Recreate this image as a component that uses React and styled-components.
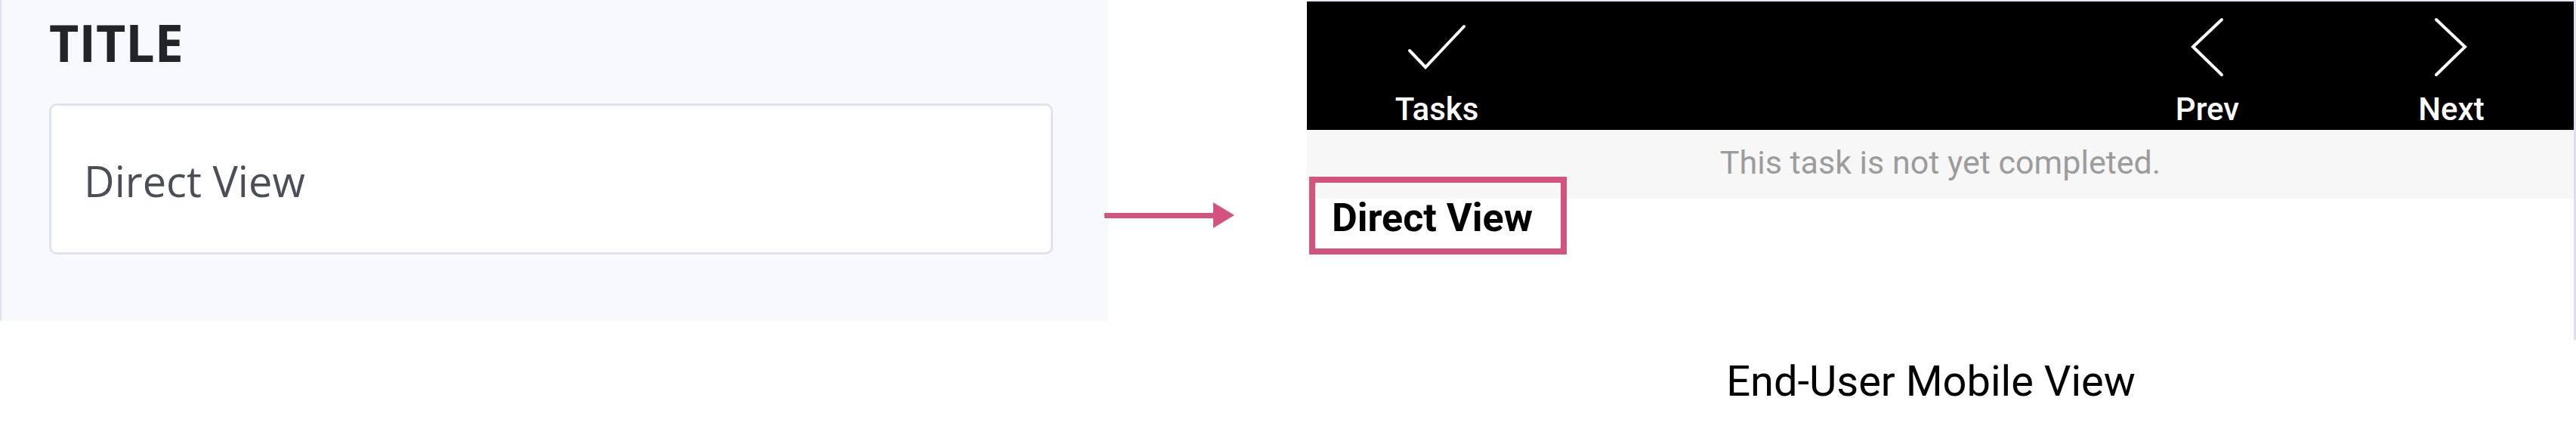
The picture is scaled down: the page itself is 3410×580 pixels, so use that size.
import React from 'react';
import styled, { createGlobalStyle } from 'styled-components';

// =======================
// Global
// =======================

const GlobalStyle = createGlobalStyle`
  html, body {
    margin: 0;
    padding: 0;
    background: #ffffff;
  }
  * {
    box-sizing: border-box;
  }
`;

const Page = styled.div`
  display: flex;
  align-items: flex-start;
  width: 3410px;
  height: 580px;
  overflow: hidden;
  background: #fff;
`;

// =======================
// Editor panel (left)
// =======================

const EditorPanel = styled.div`
  width: 1467px;
  height: 425px;
  flex-shrink: 0;
  background: #f8f9fd;
  border-left: 2px solid #dde1f0;
  padding: 22px 73px 0 63px;
  font-family: 'Open Sans', 'Liberation Sans', sans-serif;
`;

const FieldLabel = styled.div`
  font-size: 68px;
  line-height: 68px;
  font-weight: 700;
  color: #212529;
`;

const TextField = styled.div`
  margin-top: 47px;
  height: 200px;
  display: flex;
  align-items: center;
  background: #fff;
  border: 3px solid #dfe2ef;
  border-radius: 10px;
  padding: 4px 0 0 43px;
  font-size: 56px;
  color: #4a4f57;
`;

// =======================
// Arrow
// =======================

const ArrowWrap = styled.div`
  flex-shrink: 0;
  margin-left: -5px;
  margin-top: 268px;
  width: 172px;
  height: 34px;
  display: flex;
`;

const Arrow = () => (
  <svg width="172" height="34" viewBox="0 0 172 34">
    <rect x="0" y="14" width="146" height="7" fill="#d4527f" />
    <polygon points="144,0 172,17 144,34" fill="#d4527f" />
  </svg>
);

// =======================
// Mobile preview (right)
// =======================

const PreviewColumn = styled.div`
  margin-left: 96px;
  flex: 1;
  display: flex;
  flex-direction: column;
  font-family: Roboto, 'Liberation Sans', sans-serif;
`;

const PhoneFrame = styled.div`
  height: 450px;
  border-top: 2px solid #e4e6f2;
  border-right: 3px solid #dcdfee;
  border-top-left-radius: 6px;
  background: #fff;
`;

const TopBar = styled.div`
  height: 170px;
  background: #000;
  display: flex;
  align-items: flex-start;
  padding: 20px 42px 0 52px;
`;

const NavButton = styled.div`
  width: 240px;
  display: flex;
  flex-direction: column;
  align-items: center;
  margin-left: ${({ push }) => (push ? 'auto' : '0')};
  margin-right: ${({ gap }) => gap || 0}px;
  color: #fff;
`;

const NavLabel = styled.span`
  margin-top: 22px;
  font-size: 42px;
  line-height: 41px;
  font-weight: 500;
`;

const StatusBand = styled.div`
  height: 91px;
  background: #f7f7f7;
  text-align: center;
  font-size: 43px;
  line-height: 87px;
  color: #9c9c9c;
`;

const Highlight = styled.div`
  position: relative;
  margin: -29px 0 0 3px;
  width: 341px;
  height: 103px;
  border: 8px solid #d4527f;
  padding: 21px 0 0 22px;
  font-size: 52px;
  line-height: 52px;
  font-weight: 700;
  color: #000;
`;

const Caption = styled.div`
  margin-top: 27px;
  padding-right: 28px;
  text-align: center;
  font-size: 56px;
  line-height: 56px;
  color: #000;
`;

const Icon = ({ points }) => (
  <svg width="80" height="80" viewBox="0 0 80 80">
    <polyline
      points={points}
      fill="none"
      stroke="#fff"
      strokeWidth="4"
      strokeLinecap="round"
      strokeLinejoin="miter"
    />
  </svg>
);

const navItems = [
  { label: 'Tasks', points: '4,45 25,67 76,13' },
  { label: 'Prev', points: '59,4 21,40 59,77', push: true, gap: 83 },
  { label: 'Next', points: '20,4 58,40 20,77' },
];

// =======================
// Main Component
// =======================

const App = () => (
  <>
    <GlobalStyle />
    <Page>
      <EditorPanel>
        <FieldLabel>TITLE</FieldLabel>
        <TextField>Direct View</TextField>
      </EditorPanel>

      <ArrowWrap>
        <Arrow />
      </ArrowWrap>

      <PreviewColumn>
        <PhoneFrame>
          <TopBar>
            {navItems.map(({ label, points, push, gap }) => (
              <NavButton key={label} push={push} gap={gap}>
                <Icon points={points} />
                <NavLabel>{label}</NavLabel>
              </NavButton>
            ))}
          </TopBar>
          <StatusBand>This task is not yet completed.</StatusBand>
          <Highlight>Direct View</Highlight>
        </PhoneFrame>
        <Caption>End-User Mobile View</Caption>
      </PreviewColumn>
    </Page>
  </>
);

export default App;
